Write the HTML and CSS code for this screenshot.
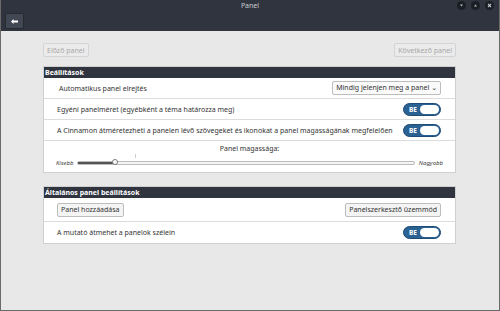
FILE: index.html
```html
<!DOCTYPE html>
<html lang="hu">
<head>
    <meta charset="UTF-8">
    <title>Panel</title>
    <link rel="stylesheet" href="styles.css">
</head>
<body>
    <div class="window">
        <header class="titlebar">
            <div class="title-row">
                <span class="title">Panel</span>
                <div class="wm-buttons">
                    <svg class="wm-btn" width="9" height="9" viewBox="0 0 9 9"><circle cx="4.5" cy="4.5" r="4.5" fill="#1b1f25"/><path d="M3 3.5 L6 3.5 L4.5 5.5 Z" fill="#b8bcc4"/></svg>
                    <svg class="wm-btn" width="9" height="9" viewBox="0 0 9 9"><circle cx="4.5" cy="4.5" r="4.5" fill="#1b1f25"/><path d="M3 5.5 L6 5.5 L4.5 3.5 Z" fill="#b8bcc4"/></svg>
                    <svg class="wm-btn" width="9" height="9" viewBox="0 0 9 9"><circle cx="4.5" cy="4.5" r="4.5" fill="#1b1f25"/><path d="M3 3 L6 6 M6 3 L3 6" stroke="#b8bcc4" stroke-width="1.2"/></svg>
                </div>
            </div>
            <button class="back-btn">
                <svg width="7" height="5" viewBox="0 0 7 5"><path d="M0 2.5 L2.5 0 L2.5 1.5 L7 1.5 L7 3.5 L2.5 3.5 L2.5 5 Z" fill="#fff"/></svg>
            </button>
        </header>

        <main class="content">
            <div class="nav-row">
                <button class="btn disabled">Előző panel</button>
                <button class="btn disabled">Következő panel</button>
            </div>

            <section class="settings">
                <h2 class="settings-head">Beállítások</h2>
                <div class="row">
                    <span class="label indent">Automatikus panel elrejtés</span>
                    <div class="select">Mindig jelenjen meg a panel <span class="caret">&#8964;</span></div>
                </div>
                <div class="row">
                    <span class="label">Egyéni panelméret (egyébként a téma határozza meg)</span>
                    <div class="switch"><span>BE</span><i></i></div>
                </div>
                <div class="row">
                    <span class="label">A Cinnamon átméretezheti a panelen lévő szövegeket és ikonokat a panel magasságának megfelelően</span>
                    <div class="switch"><span>BE</span><i></i></div>
                </div>
                <div class="slider-block">
                    <div class="slider-title">Panel magassága:</div>
                    <div class="slider-row">
                        <span class="slider-end">Kisebb</span>
                        <div class="track">
                            <div class="fill" style="width: 11%"></div>
                            <div class="knob" style="left: 11%"></div>
                            <div class="tick"></div>
                        </div>
                        <span class="slider-end">Nagyobb</span>
                    </div>
                </div>
            </section>

            <section class="settings second">
                <h2 class="settings-head">Általános panel beállítások</h2>
                <div class="row tall">
                    <button class="btn">Panel hozzáadása</button>
                    <button class="btn">Panelszerkesztő üzemmód</button>
                </div>
                <div class="row">
                    <span class="label">A mutató átmehet a panelok szélein</span>
                    <div class="switch"><span>BE</span><i></i></div>
                </div>
            </section>
        </main>
    </div>
</body>
</html>
```

FILE: styles.css
```css
* {
    margin: 0;
    padding: 0;
    box-sizing: border-box;
}
body {
    font-family: 'Noto Sans', 'DejaVu Sans', sans-serif;
    background: #e8e8e8;
    color: #333;
    width: 500px;
    height: 311px;
    overflow: hidden;
}
.window {
    height: 311px;
    border: 1px solid #6a6a6a;
    border-top: none;
    display: flex;
    flex-direction: column;
}
.titlebar {
    background: #2f343f;
    height: 31px;
    padding: 0 2px;
}
.title-row {
    position: relative;
    height: 12px;
}
.title {
    display: block;
    text-align: center;
    color: #c8ccd2;
    font-size: 7px;
    line-height: 11px;
}
.wm-buttons {
    position: absolute;
    right: 3px;
    top: 1px;
    display: flex;
    gap: 5px;
}
.wm-btn {
    display: block;
}
.back-btn {
    margin-left: 2px;
    margin-top: 1px;
    width: 19px;
    height: 16px;
    background: #414753;
    border: 1px solid #262a31;
    border-radius: 1px;
    display: flex;
    align-items: center;
    justify-content: center;
}
.content {
    flex: 1;
    padding: 12px 43px 0 42px;
}
.nav-row {
    display: flex;
    justify-content: space-between;
    margin-bottom: 9px;
}
.btn {
    font-family: inherit;
    font-size: 7px;
    height: 14px;
    padding: 0 3px;
    background: #f4f4f4;
    color: #333;
    border: 1px solid #bdbdbd;
    border-radius: 2px;
    white-space: nowrap;
}
.btn.disabled {
    background: #ebebeb;
    color: #a8a8a8;
    border-color: #d4d4d4;
}
.settings {
    background: #fff;
    border: 1px solid #cfcfcf;
}
.settings.second {
    margin-top: 13px;
}
.settings-head {
    background: #2f343f;
    color: #fff;
    font-size: 7px;
    font-weight: bold;
    line-height: 11px;
    padding-left: 1px;
}
.row {
    height: 21px;
    display: flex;
    align-items: center;
    justify-content: space-between;
    padding: 0 14px 0 13px;
    border-bottom: 1px solid #dcdcdc;
    font-size: 7px;
    white-space: nowrap;
}
.row.tall {
    height: 24px;
}
.row:last-child {
    border-bottom: none;
}
.label.indent {
    padding-left: 2px;
}
.select {
    height: 14px;
    border: 1px solid #bdbdbd;
    border-radius: 2px;
    padding: 0 3px;
    line-height: 12px;
    font-size: 7px;
    background: #fafafa;
}
.caret {
    font-size: 7px;
}
.switch {
    width: 38px;
    height: 13px;
    background: #2b6294;
    border: 1px solid #1f4c75;
    border-radius: 7px;
    display: flex;
    align-items: center;
    justify-content: space-between;
    padding: 0 1px 0 5px;
}
.switch span {
    color: #fff;
    font-size: 6.5px;
    font-weight: bold;
}
.switch i {
    width: 19px;
    height: 9px;
    background: #fff;
    border-radius: 5px;
}
.slider-block {
    height: 31px;
    padding-top: 3px;
}
.slider-title {
    text-align: center;
    font-size: 7px;
    line-height: 10px;
}
.slider-row {
    display: flex;
    align-items: center;
    gap: 4px;
    margin-top: 5px;
    padding: 0 12px 0 12px;
}
.slider-end {
    font-size: 6px;
    font-style: italic;
    color: #444;
}
.track {
    flex: 1;
    height: 4px;
    border: 1px solid #bbb;
    border-radius: 2px;
    position: relative;
    background: #f4f4f4;
}
.fill {
    height: 2px;
    background: #555;
}
.knob {
    position: absolute;
    top: -3px;
    width: 6px;
    height: 6px;
    margin-left: -3px;
    border-radius: 50%;
    background: #fff;
    border: 1px solid #777;
}
.tick {
    position: absolute;
    left: 17%;
    top: -8px;
    width: 1px;
    height: 4px;
    background: #ccc;
}
```
